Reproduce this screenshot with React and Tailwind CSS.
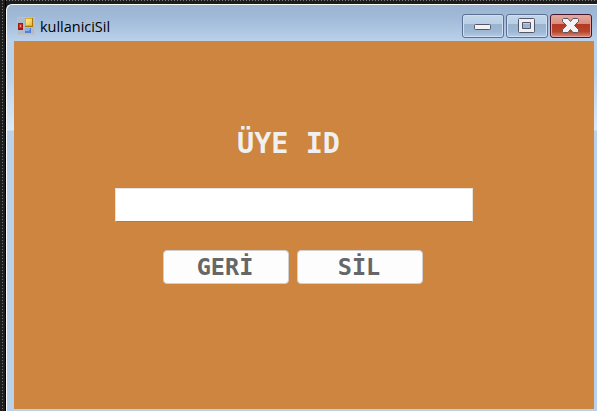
function AppIcon() {
  return (
    <svg className="block" width="18" height="18" viewBox="0 0 18 18" shapeRendering="crispEdges">
      <defs>
        <linearGradient id="gold" x1="0" y1="0" x2="1" y2="1">
          <stop offset="0" stopColor="#ffeeaa" />
          <stop offset="1" stopColor="#efbb22" />
        </linearGradient>
      </defs>
      <path d="M.5.5h17v17H.5z" fill="#b0bccb" stroke="#bcc2c8" />
      <rect x="1" y="6" width="5" height="7" fill="#a3160d" />
      <rect x="2" y="7" width="3" height="4" fill="#cc3a26" />
      <rect x="3" y="8" width="1" height="2" fill="#f0a090" />
      <rect x="8" y="1" width="8" height="9" fill="#a87a0c" />
      <rect x="8" y="1" width="7" height="8" fill="#e0ab18" />
      <rect x="9" y="2" width="6" height="6" fill="url(#gold)" />
      <rect x="8" y="11" width="6" height="5" fill="#4f80d4" />
      <path d="M8 11h5v2h-1v1H8z" fill="#88b0f0" />
    </svg>
  );
}

function CaptionButton({ className, children }) {
  return (
    <div className={`flex h-6 w-[42px] items-center justify-center rounded-[3px] border ${className}`}>
      {children}
    </div>
  );
}

const glass =
  "border-[#5b6f92] bg-[linear-gradient(#c3d7eb_0%,#b9cfe5_42%,#9bb3cd_43%,#9db8d5_75%,#b4cce6_100%)] shadow-[inset_0_0_0_1px_#d0e0f2]";
const red =
  "border-[#45152a] bg-[linear-gradient(#e5aaa0_0%,#d98c7f_42%,#b53a22_43%,#b8442c_75%,#d68a78_100%)] shadow-[inset_0_0_0_1px_#e5a59c]";

function FormButton({ children }) {
  return (
    <button className="flex h-[34px] w-[126px] items-center justify-center rounded-[4px] border border-[#d0cfce] bg-[#fdfdfd] font-['DejaVu_Sans_Mono',monospace] text-[23.5px] leading-6 font-bold text-[#666]">
      <span className="block pr-0.5 pb-px">{children}</span>
    </button>
  );
}

export default function App() {
  return (
    <div className="flex h-[411px] w-[597px] overflow-hidden bg-[#1c1c1d]">
      <div className="flex w-[6px] shrink-0 border-r border-black">
        <div className="ml-[2px] w-px bg-[repeating-linear-gradient(#777_0_1px,#222_1px_3px)]" />
      </div>
      <div className="flex min-w-0 flex-1 flex-col">
        <div className="h-1 shrink-0">
          <div className="h-px bg-[repeating-linear-gradient(90deg,#777_0_1px,#222_1px_3px)]" />
        </div>
        <div className="flex flex-1 flex-col rounded-tl-[6px] border-t border-l border-white bg-[#b9d1ea] bg-[linear-gradient(#9ab4d2_0px,#a2bbd8_14px,#b9d1ea_36px,#b9d1ea_66px,#dce9f7_125px,#b9d1ea_126px)]">
          <div className="flex h-9 shrink-0 items-start pt-[9px] pr-[5px]">
            <div className="mt-[3px] ml-[10px] h-[18px]">
              <AppIcon />
            </div>
            <span className="mt-[3px] ml-[5px] font-['Open_Sans',sans-serif] text-[14.5px] leading-5 tracking-[-0.02px] text-black">
              kullaniciSil
            </span>
            <div className="ml-auto flex gap-0.5">
              <CaptionButton className={glass}>
                <svg width="18" height="7" viewBox="0 0 18 7" className="mt-[3px]">
                  <rect x=".5" y=".5" width="16" height="5" rx="1" fill="#f3f3f3" stroke="#545669" />
                </svg>
              </CaptionButton>
              <CaptionButton className={glass}>
                <svg width="18" height="16" viewBox="0 0 18 16">
                  <path
                    fillRule="evenodd"
                    d="M1.500.5h14a1 1 0 0 1 1 1v12a1 1 0 0 1-1 1h-14a1 1 0 0 1-1-1v-12a1 1 0 0 1 1-1zM4.500 4.500h8v6h-8z"
                    fill="#f0f0f0"
                    stroke="#545669"
                  />
                </svg>
              </CaptionButton>
              <CaptionButton className={red}>
                <svg width="18" height="16" viewBox="0 0 18 16">
                  <path
                    d="M1.500.5h4.500L8.500 3.500 11 .5h4.500l1 1v2l-4 4 4 4v2l-1 1H11l-2.500-3-2.500 3H1.500l-1-1v-2l4-4-4-4v-2z"
                    fill="#f3f3f3"
                    stroke="#545669"
                    strokeLinejoin="round"
                  />
                </svg>
              </CaptionButton>
            </div>
          </div>
          <main className="mr-[3px] mb-[2px] ml-[7px] flex flex-1 flex-col bg-[#cd853f]">
            <label
              htmlFor="member-id"
              className="mt-[87px] ml-[223px] block font-['DejaVu_Sans_Mono',monospace] text-[28.5px] leading-8 font-bold whitespace-pre text-[#f0f0f0]"
            >
              ÜYE ID
            </label>
            <input
              id="member-id"
              className="mt-[28px] ml-[101px] block h-[34px] w-[358px] rounded-[1px] border border-[#e6e3e0] border-b-[#858585] bg-white outline-none"
            />
            <div className="mt-[28px] ml-[149px] flex gap-2">
              <FormButton>GERİ</FormButton>
              <FormButton>SİL</FormButton>
            </div>
          </main>
        </div>
      </div>
    </div>
  );
}
